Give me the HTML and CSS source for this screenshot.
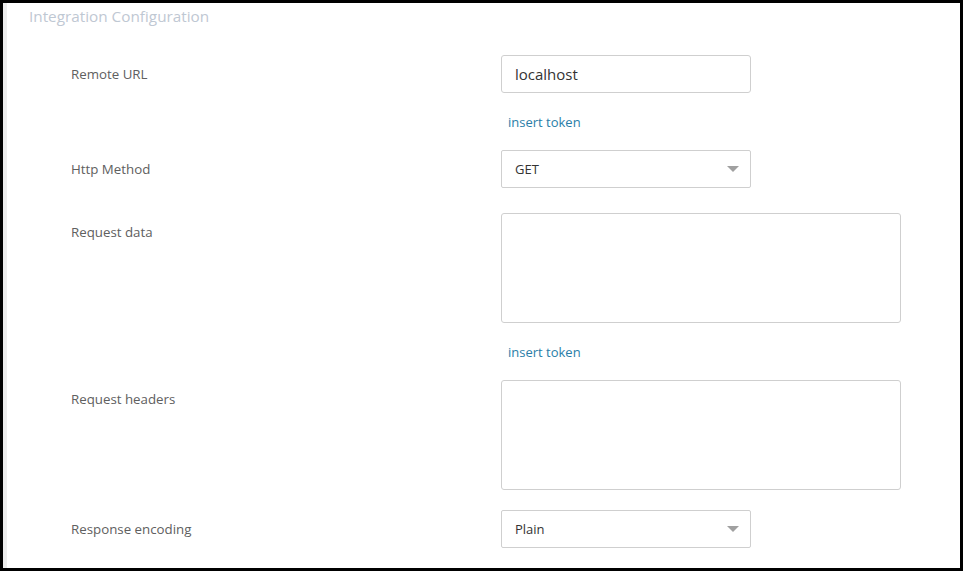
FILE: index.html
```html
<!DOCTYPE html>
<html lang="en">
<head>
<meta charset="utf-8">
<title>Integration Configuration</title>
<link rel="stylesheet" href="styles.css">
</head>
<body>
<div class="frame">
  <div class="strip"></div>
  <div class="panel">
    <div class="title">Integration Configuration</div>
    <div class="form">
      <div class="row">
        <div class="label">Remote URL</div>
        <div class="field">
          <div class="input">localhost</div>
          <a class="token" href="#">insert token</a>
        </div>
      </div>
      <div class="row row-select">
        <div class="label">Http Method</div>
        <div class="field">
          <div class="select"><span>GET</span><span class="caret"></span></div>
        </div>
      </div>
      <div class="row">
        <div class="label">Request data</div>
        <div class="field">
          <div class="textarea"></div>
          <a class="token" href="#">insert token</a>
        </div>
      </div>
      <div class="row row-area">
        <div class="label">Request headers</div>
        <div class="field">
          <div class="textarea"></div>
        </div>
      </div>
      <div class="row">
        <div class="label">Response encoding</div>
        <div class="field">
          <div class="select"><span>Plain</span><span class="caret"></span></div>
        </div>
      </div>
    </div>
  </div>
</div>
</body>
</html>
```
FILE: styles.css
```css
html, body {
  margin: 0;
  padding: 0;
  background: #000;
}
body {
  font-family: "Open Sans", "Liberation Sans", sans-serif;
}
.frame {
  width: 963px;
  height: 571px;
  box-sizing: border-box;
  border: 3px solid #000;
  background: #fff;
  display: flex;
  overflow: hidden;
}
.strip {
  width: 4px;
  flex: none;
  background: #ececec;
}
.panel {
  flex: 1;
  padding: 3px 0 0 22px;
}
.title {
  font-size: 15.3px;
  line-height: 20px;
  color: #bfc8d3;
}
.form {
  display: flex;
  flex-direction: column;
  gap: 19px;
  margin-top: 29px;
  padding-left: 42px;
}
.row {
  display: grid;
  grid-template-columns: 430px 1fr;
}
.row-select {
  margin-bottom: 6px;
}
.row-area {
  margin-bottom: 1px;
}
.label {
  font-size: 13.3px;
  line-height: 18px;
  padding-top: 10px;
  color: #606060;
}
.field {
  display: flex;
  flex-direction: column;
  align-items: flex-start;
}
.input, .select {
  width: 250px;
  height: 38px;
  box-sizing: border-box;
  border: 1px solid #cfcfcf;
  border-radius: 3px;
  display: flex;
  align-items: center;
  padding: 0 13px;
  color: #333;
}
.input {
  font-size: 15px;
}
.select {
  font-size: 13px;
  border-radius: 2px;
  justify-content: space-between;
  padding-right: 11px;
}
.caret {
  width: 0;
  height: 0;
  border-left: 6px solid transparent;
  border-right: 6px solid transparent;
  border-top: 6px solid #a0a0a0;
}
.textarea {
  width: 400px;
  height: 110px;
  box-sizing: border-box;
  border: 1px solid #cfcfcf;
  border-radius: 3px;
}
.token {
  margin-top: 20px;
  padding-left: 7px;
  font-size: 13px;
  line-height: 18px;
  color: #2a7ea8;
  text-decoration: none;
}
```
